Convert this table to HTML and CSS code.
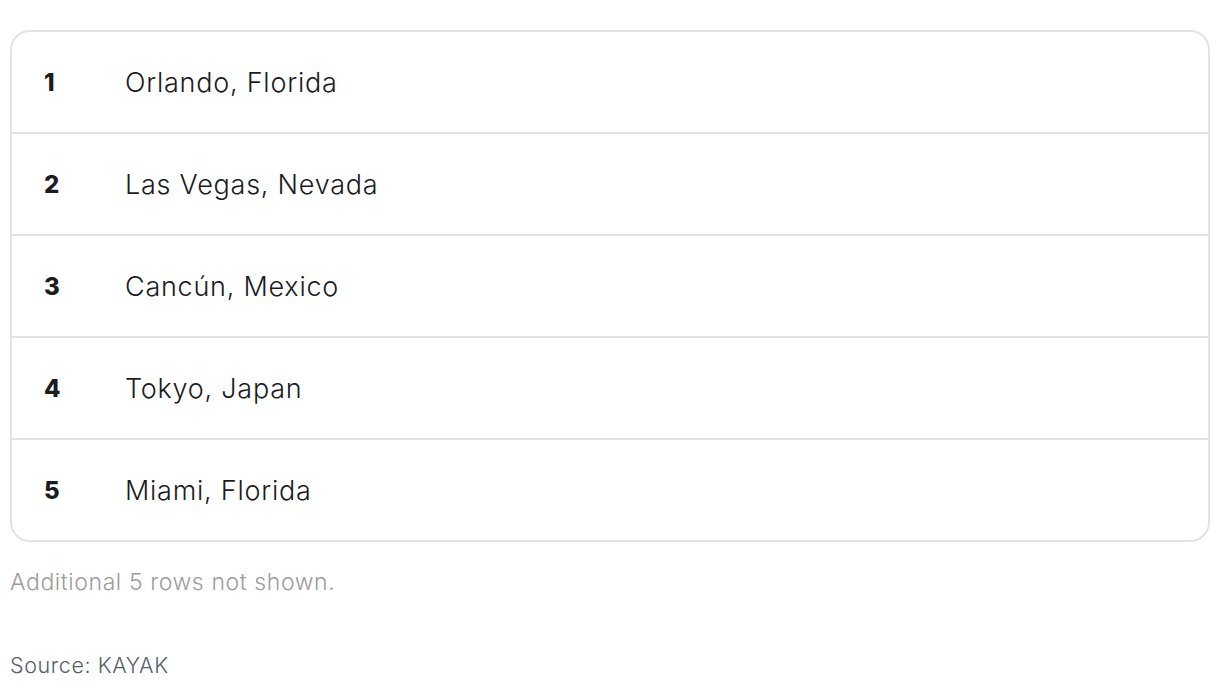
FILE: index.html
```html
<!DOCTYPE html>
<html>
<head>
<meta charset="utf-8">
<link rel="stylesheet" href="styles.css">
</head>
<body>
<div class="wrap">
  <div class="card">
    <div class="row"><span class="num">1</span><span class="name">Orlando, Florida</span></div>
    <div class="row"><span class="num">2</span><span class="name">Las Vegas, Nevada</span></div>
    <div class="row"><span class="num">3</span><span class="name">Cancún, Mexico</span></div>
    <div class="row"><span class="num">4</span><span class="name">Tokyo, Japan</span></div>
    <div class="row"><span class="num">5</span><span class="name">Miami, Florida</span></div>
  </div>
  <p class="note">Additional 5 rows not shown.</p>
  <p class="source">Source: KAYAK</p>
</div>
</body>
</html>
```
FILE: styles.css
```css
html, body {
  margin: 0;
  padding: 0;
  background: #fff;
  font-family: Inter, "Noto Sans", sans-serif;
}
.wrap {
  padding: 30px 10px 0 10px;
}
.card {
  border: 2px solid #e3e3e3;
  border-radius: 20px;
  display: flex;
  flex-direction: column;
}
.row {
  height: 100px;
  display: flex;
  align-items: center;
  border-bottom: 2px solid #e3e3e3;
}
.row:last-child {
  border-bottom: none;
}
.num {
  width: 81px;
  padding-left: 32px;
  font-size: 24px;
  font-weight: 800;
  color: #1a1c1e;
}
.name {
  font-size: 27px;
  font-weight: 300;
  color: #1a1c1e;
  letter-spacing: 0.75px;
}
.note {
  margin: 26px 0 0 0;
  font-size: 23px;
  color: #9c9c9c;
  font-weight: 300;
  letter-spacing: 0.6px;
}
.source {
  margin: 56px 0 0 0;
  font-size: 21.5px;
  color: #545f69;
  font-weight: 300;
  letter-spacing: 0.6px;
}
```
